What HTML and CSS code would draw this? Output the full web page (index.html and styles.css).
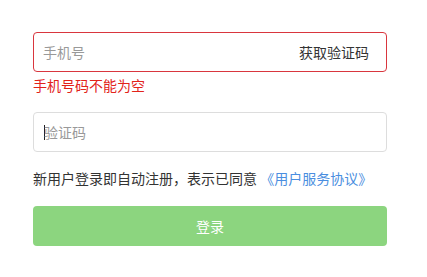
FILE: index.html
```html
<!DOCTYPE html>
<html lang="zh-CN">
<head>
    <meta charset="UTF-8">
    <meta name="viewport" content="width=device-width, initial-scale=1.0">
    <title>登录</title>
    <link rel="stylesheet" href="styles.css">
</head>
<body>

    <div class="login-box">
        <form class="login-form" onsubmit="return false">
            <div class="field field-error">
                <input type="text" class="field-input" placeholder="手机号">
                <span class="field-action">获取验证码</span>
            </div>
            <div class="error-text">手机号码不能为空</div>

            <div class="field field-code">
                <span class="caret"></span>
                <input type="text" class="field-input" placeholder="验证码">
            </div>

            <p class="agreement">新用户登录即自动注册，表示已同意 <a href="#" class="agreement-link">《用户服务协议》</a></p>

            <button type="submit" class="login-btn" disabled>登录</button>
        </form>
    </div>

</body>
</html>
```

FILE: styles.css
```css
body {
    margin: 0;
    background: #fff;
    font-family: "Noto Sans CJK SC", "Liberation Sans", sans-serif;
    font-size: 14px;
    color: #333;
}
.login-box {
    width: 354px;
    padding: 32px 0 0 33px;
}
.field {
    display: flex;
    align-items: center;
    height: 40px;
    box-sizing: border-box;
    border: 1px solid #ddd;
    border-radius: 4px;
    padding: 0 17px 0 9px;
}
.field-error {
    border-color: #d9363e;
}
.field-code {
    margin-top: 17px;
}
.caret {
    flex: none;
    width: 1px;
    height: 15px;
    margin: 0 -1px 0 1px;
    background: #222;
}
.field-input {
    flex: 1;
    min-width: 0;
    border: none;
    outline: none;
    padding: 0;
    font-family: inherit;
    font-size: 14px;
    color: #333;
    background: transparent;
}
.field-input::placeholder {
    color: #999;
}
.field-action {
    color: #333;
    cursor: pointer;
}
.error-text {
    margin-top: 3px;
    line-height: 20px;
    color: #e2231a;
}
.agreement {
    margin: 16px 0 18px;
    line-height: 20px;
    color: #333;
}
.agreement-link {
    color: #4a8ee0;
    text-decoration: none;
}
.login-btn {
    display: block;
    width: 100%;
    height: 40px;
    border: none;
    border-radius: 4px;
    background: #8cd57f;
    color: #fff;
    font-family: inherit;
    font-size: 14px;
}
```
